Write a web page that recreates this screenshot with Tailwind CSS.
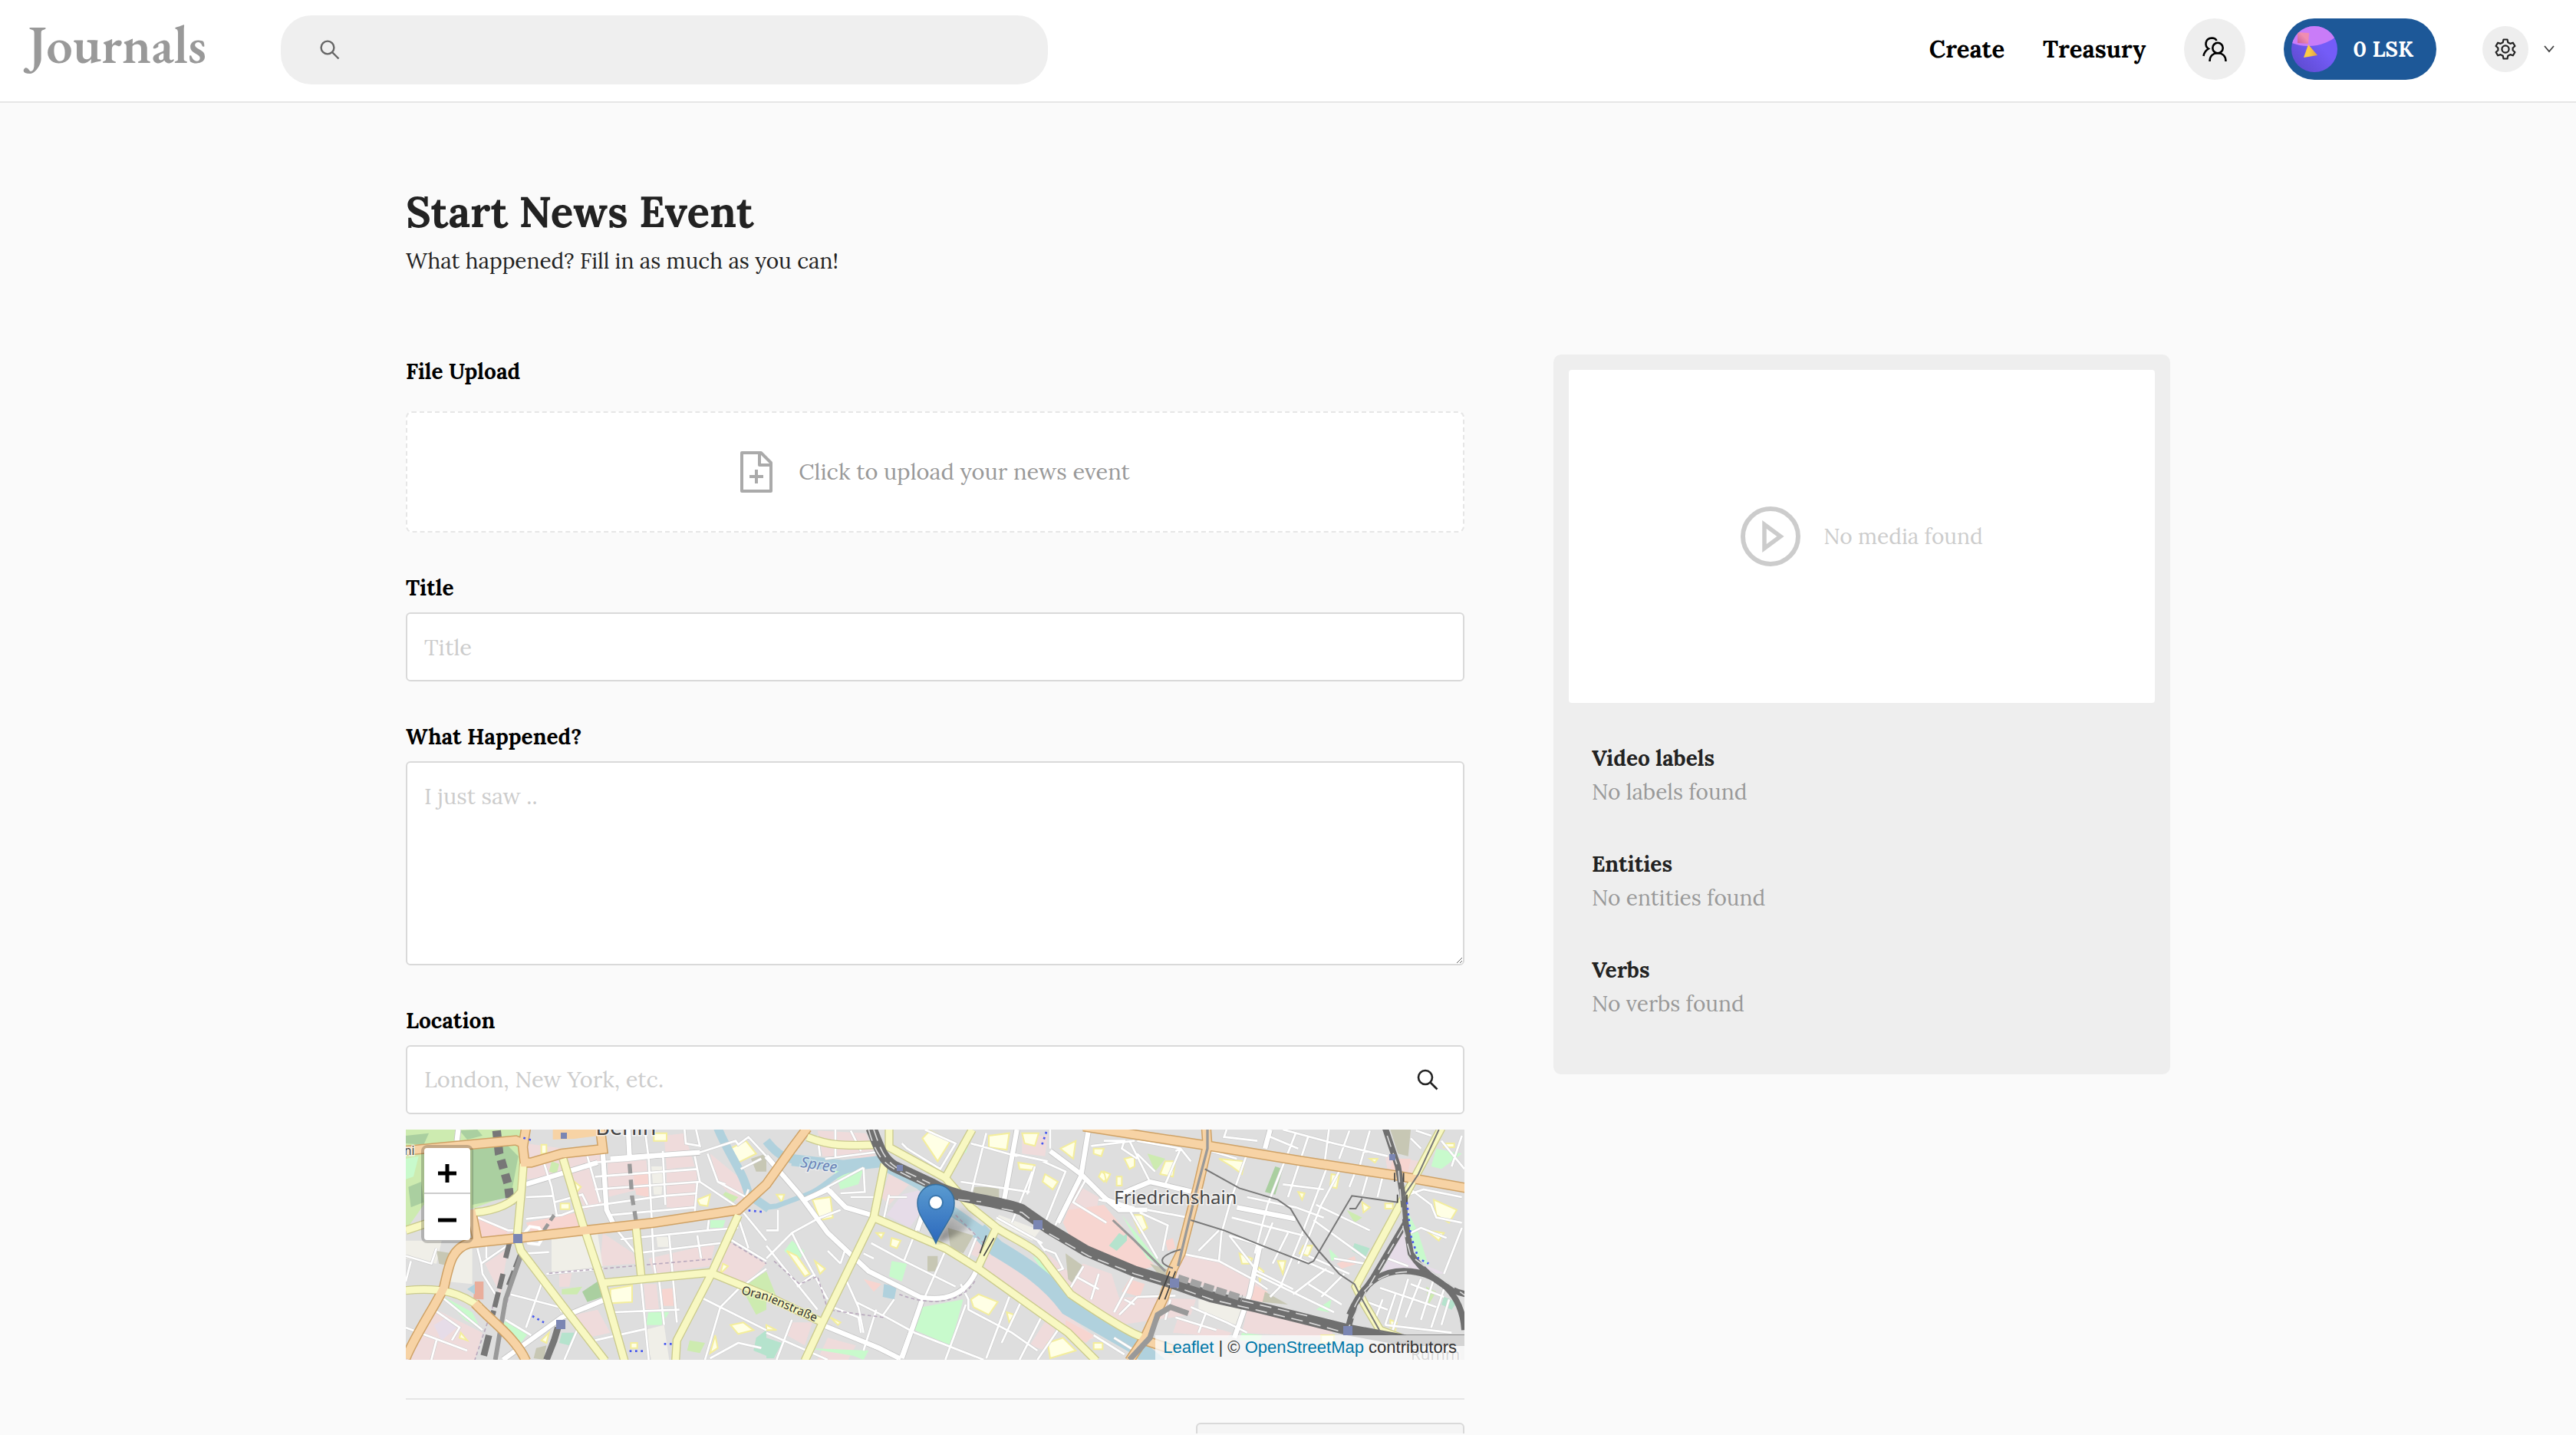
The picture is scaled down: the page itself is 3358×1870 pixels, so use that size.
<!DOCTYPE html>
<html lang="en">
<head>
    <meta charset="UTF-8">
    <meta name="viewport" content="width=device-width, initial-scale=1.0">
    <title>Journals - Start News Event</title>
    <script src="https://cdn.jsdelivr.net/npm/@tailwindcss/browser@4"></script>
</head>
<body class="bg-[#fafafa] min-h-screen overflow-x-hidden font-['Lora','Liberation_Serif',serif] text-[28px] leading-[44px] text-[#222]">
    <header class="bg-white border-b-2 border-[#e6e6e6] h-[134px] flex items-center pl-9 pr-7">
        <a href="#" class="w-[330px] shrink-0 -mt-4 font-['EB_Garamond','Crimson_Text','Liberation_Serif',serif] text-[69px] leading-[80px] font-semibold text-[#999]">Journals</a>
        <label class="w-[1000px] h-[90px] -mt-0.5 rounded-[40px] bg-[#efefef] flex items-center px-[50px] gap-5" for="search">
            <svg class="w-7 h-7 text-[#666]" viewBox="0 0 28 28" fill="none" stroke="currentColor" stroke-width="2.4"><circle cx="11" cy="11" r="8.4"/><path d="M17 17l8.500 8.500"/></svg>
            <input id="search" type="text" aria-label="Search" class="flex-1 bg-transparent outline-none">
        </label>

        <nav class="ml-auto -mt-1 flex items-center text-[31px] font-bold text-black">
            <a href="#">Create</a>
            <a href="#" class="ml-[50px]">Treasury</a>
            <button aria-label="Accounts" class="ml-[50px] w-20 h-20 rounded-full bg-[#eee] flex items-center justify-center">
                <svg class="w-8 h-8" viewBox="0 0 32 32" fill="none" stroke="currentColor" stroke-width="2.6"><circle cx="20" cy="14.500" r="6.700"/><path d="M9.500 32c0-6.500 4-10.800 10.500-10.800S30.500 25.500 30.500 32M1.500 25c.5-4 2.500-7 6.500-9.500-5-3-5.500-13.500 4.500-14 3 0 5 1.500 6 3.500"/></svg>
            </button>
            <button class="ml-[50px] h-20 rounded-full bg-[#1d5898] text-[28px] text-white flex items-center gap-5 pl-[10px] pr-[30px]">
                <svg class="w-[60px] h-[60px]" viewBox="0 0 60 60">
                    <defs>
                        <clipPath id="face"><circle cx="30" cy="30" r="30"/></clipPath>
                        <linearGradient id="violet" x1="1" y1="0" x2="0" y2="1"><stop offset=".4" stop-color="#745cf8"/><stop offset="1" stop-color="#5a48c8"/></linearGradient>
                        <linearGradient id="rose" x1="1" y1="0" x2="0" y2="1"><stop offset=".4" stop-color="#f08db0"/><stop offset="1" stop-color="#c65c9c"/></linearGradient>
                        <linearGradient id="gold"><stop offset=".4" stop-color="#fccb45"/><stop offset="1" stop-color="#dd9a4a"/></linearGradient>
                    </defs>
                    <g clip-path="url(#face)">
                        <path fill="url(#violet)" d="M0 0h60v60H0z"/>
                        <circle cx="22" cy="-34" r="60" fill="#c97cf8"/>
                        <path fill="url(#rose)" d="M8 8l15 1-1 14-14-1z"/>
                        <path fill="url(#gold)" d="M22 24l12 14-18 3z"/>
                    </g>
                </svg>
                0 LSK
            </button>
            <button aria-label="Settings" class="ml-[60px] w-[60px] h-[60px] rounded-full bg-[#eee] flex items-center justify-center">
                <svg class="w-7 h-7" viewBox="0 0 28 28" fill="none" stroke="#222" stroke-width="2.200" stroke-linejoin="round"><path d="M11.500 1.500h5l.8 3.700 3 1.700 3.600-1.200 2.500 4.300-2.800 2.500v3l2.800 2.500-2.500 4.300-3.600-1.200-3 1.700-.8 3.700h-5l-.8-3.700-3-1.700-3.600 1.200L1.600 18l2.800-2.500v-3L1.600 10l2.500-4.300 3.600 1.200 3-1.700z"/><circle cx="14" cy="14" r="4.600"/></svg>
            </button>
            <button aria-label="Open menu" class="ml-5">
                <svg class="w-[14px] h-[10px]" viewBox="0 0 14 10" fill="none" stroke="#444" stroke-width="1.800"><path d="M1 1l6 7 6-7"/></svg>
            </button>
        </nav>
    </header>

    <main class="w-full max-w-[2300px] mx-auto pt-[106px]">
        <h1 class="text-[55px] leading-[72px] font-bold">Start News Event</h1>
        <p class="mt-1.5">What happened? Fill in as much as you can!</p>

        <div class="mt-[100px] flex items-start gap-[116px]">
            <form class="flex-1 text-black">
                <label for="file" class="block font-bold">File Upload</label>
                <label for="file" class="mt-[30px] h-[158px] rounded-lg border-2 border-dashed border-[#e6e6e6] bg-white flex items-center justify-center gap-[34px] text-[29px] text-[#999]">
                    <svg class="w-[42px] h-[54px]" viewBox="0 0 42 54" fill="none" stroke="#aaa" stroke-width="4" stroke-linejoin="round"><path d="M2 2h25l13 13v37H2zM25 2v16h15M21 24v18M12 33h18"/></svg>
                    Click to upload your news event
                    <input id="file" type="file" class="hidden">
                </label>

                <label for="title" class="mt-[50px] block font-bold">Title</label>
                <input id="title" type="text" placeholder="Title" class="mt-[10px] block w-full h-[90px] rounded-md border-2 border-[#d9d9d9] bg-white px-[22px] text-[29px] placeholder:text-[#ccc]">

                <label for="what" class="mt-[50px] block font-bold">What Happened?</label>
                <textarea id="what" placeholder="I just saw .." class="mt-[10px] block w-full h-[266px] rounded-md border-2 border-[#d9d9d9] bg-white px-[22px] py-[22px] text-[29px] resize-y placeholder:text-[#ccc]"></textarea>

                <label for="location" class="mt-[50px] block font-bold">Location</label>
                <div class="mt-[10px] h-[90px] rounded-md border-2 border-[#d9d9d9] bg-white flex items-center pl-[22px] pr-8">
                    <input id="location" type="text" placeholder="London, New York, etc." class="flex-1 text-[29px] outline-none placeholder:text-[#ccc]">
                    <button type="button" aria-label="Find location">
                        <svg class="w-7 h-7" viewBox="0 0 28 28" fill="none" stroke="#222" stroke-width="2.600"><circle cx="11" cy="11" r="9"/><path d="M17.500 17.500l9 9"/></svg>
                    </button>
                </div>

                <!-- Map -->
                <div class="relative mt-5 h-[300px] overflow-hidden bg-[#dedede]">
                    <svg class="w-full h-full" viewBox="30 36 4140 900" preserveAspectRatio="xMidYMid slice" font-family="Noto Sans, sans-serif">
                        <defs>
                            <g id="streets" fill="none">
                                <path d="M500 250L640 210 760 165 900 155 1180 125 1320 80 1330 95 1370 65 1440 140M800 120L815 340 840 410 930 520M895 36L905 150M965 36L980 150 1000 560 1010 620M1035 120L1045 330M1120 36L1125 90 1180 100 1165 36M1160 140L1180 240 1330 340M1210 130L1250 240 1280 250M1340 190L1420 150M1250 240L1360 300 1370 270M740 140L790 320M770 220L1170 190M770 270L1180 240M500 300L610 295M500 385L640 370 720 340 1040 295 1170 285M830 370L1160 340M570 165L600 260 620 370M610 320L720 290 740 330M1170 240L1160 360M1215 390L1210 430M870 465L1210 430 1330 420M925 520L1260 480M1060 450L1090 790M1170 450L1185 540M580 600L800 580M300 375L430 430 450 430M590 515L500 520M30 530L130 560 150 500M50 550L30 630M310 500L325 560 440 480M325 560L330 600 380 680M345 490L345 540M170 690L330 820M140 740L240 810 210 860M30 810L270 900M150 860L130 936M440 680L630 730 640 750M560 640L500 810M420 780L520 840M700 820L650 936M770 860L970 815M840 750L1100 740M950 630L980 936M1020 620L1040 800M1180 690L1440 820M1330 660L1260 730 1200 936M1440 580L1330 660M1350 360L1440 470M1330 380L1370 500M1290 460L1440 550M1220 930L1330 870 1420 890"/>
                                <g transform="translate(1440)">
                                    <path d="M200 60L210 140M270 36L270 150M330 40L370 120M230 150L460 120M380 185L385 280 290 285M250 270L320 345M380 185L240 260 150 310M480 300L550 300M440 300L330 300M0 430L45 430 45 350M0 540L100 440 200 385 290 350M100 440L130 500 240 700M0 490L200 740M120 650L190 600M240 510L290 560M290 560L310 500M380 520L420 540M410 480L540 550 740 650M480 290L460 380M610 370L540 545M700 510L620 690M530 90L550 110 680 190 740 90 620 36M860 50L800 290M800 90L980 140M760 240L930 265 1030 280M1110 36L1110 110M1080 160L1170 200 1090 400M1040 200L960 400M1050 180L1020 290M960 130L1100 160M1230 210L1130 410M1270 100L1440 80M1250 230L1200 320 1330 400M1300 310L1440 340M900 380L1080 480M1080 500L1130 520 1160 580 1130 590M1240 570L1180 670M1210 610L1300 660M1440 600L1360 750M1300 600L1270 700M310 620L360 730 380 830M260 730L360 770 370 830M350 710L470 770 580 830 680 870M240 810L500 920M100 780L40 936M0 830L240 936M430 740L380 900M600 720L520 936M780 720L700 936M790 740L960 830 1060 900M950 690L860 930M1000 700L920 870M1080 760L990 936M1140 820L1060 936M580 830L850 936M500 700L450 770M1280 840L1400 915M760 640L790 700 790 740M820 460L780 560M1090 510L1060 470"/>
                                </g>
                                <g transform="translate(2760)">
                                    <path d="M0 80L80 80 70 110 130 150M100 80L180 240M130 80L300 110 340 160M300 110L240 250M130 130L200 200M480 36L470 65 600 80M560 130L500 300 460 440M750 50L640 330 590 520M800 60L760 180 720 300M700 36L900 90 1110 140M880 36L860 190M960 40L920 150M1040 40L1000 180M640 60L760 110M420 120L520 150M870 190L780 430 690 650M920 200L850 330 760 560M980 210L960 260M1030 220L1010 290M1090 220L1070 300M700 250L860 270M560 300L750 340 860 380M500 380L700 430 780 450M490 450L620 490M490 450L600 590 740 660M830 330L1040 430M820 390L930 470 1040 550M740 530L900 600M800 530L960 600M900 540L1020 560M460 440L450 550M660 400L620 500M720 440L660 560M590 600L900 750M740 680L870 580M800 640L930 720M650 690L700 640M850 690L940 600M300 110L280 120M100 350L210 540M140 360L250 410 230 510M170 350L330 380M450 430L370 510M300 520L450 550 580 620 640 660M260 700L240 780M340 730L480 790 560 830M280 770L440 820M400 750L370 830M130 690L280 685M130 690L60 760M80 700L120 720M40 850L120 900M1080 655L1300 730M1090 700L1060 780M1140 680L1100 800M1190 620L1130 820M1240 620L1180 770M1290 620L1240 780M1330 660L1280 810M1350 700L1320 800M1030 710L1110 740M1100 800L1360 830M1200 640L1330 690M1110 540L1190 570M1200 440L1240 420 1340 460M1200 270L1280 330 1300 380 1400 400M1190 290L1250 270 1400 300M1320 80L1410 190M1400 60L1360 180M1200 70L1240 110M1220 40L1280 60M1400 420L1330 600"/>
                                </g>
                            </g>
                            <g id="streets-wide" fill="none">
                                <path d="M235 36L230 80M500 250L780 165M830 150L1180 125M900 36L905 150M800 120L815 350 840 400M410 936L640 770 810 700"/>
                                <g transform="translate(1440)">
                                    <path d="M0 140L130 290 240 440 400 590 600 690C700 710 780 680 820 590M150 310L240 270 310 340 410 370M980 36L930 310M1260 36L1230 220 1140 400M1110 120L1230 210 1330 310 1440 350M220 800L440 890 520 930M610 700L530 930M610 370L590 430"/>
                                </g>
                                <g transform="translate(2760)"><path d="M0 300L60 350 170 350M60 290L180 240 350 280M520 340L750 385M610 490L570 680 510 850M650 36L630 110"/></g>
                            </g>
                            <g id="roads-yellow" fill="none">
                                <path d="M490 170L480 300 465 460 480 510 640 720 810 940M645 150L720 400 800 640 885 940M930 415L950 605M805 635L1220 595 1440 685 1660 790M1330 370L1280 480 1220 610 1090 860 1085 940M300 360C400 350 450 320 480 280M30 430L120 400M30 665C180 650 250 680 320 730"/>
                                <g transform="translate(1440)"><path d="M160 65C250 100 300 100 440 95M480 36L480 105 700 225 800 340 900 420C960 460 1060 500 1090 550L1190 680C1250 720 1350 790 1440 835L1500 860M805 36L700 225M462 170L420 380 220 790 150 940M420 380L700 500 830 580 1180 830 1290 940M895 430L825 580"/></g>
                                <g transform="translate(2760)"><path d="M1320 30L1180 290 985 650 1020 720 1080 820 1160 850"/></g>
                            </g>
                            <g id="roads-orange" fill="none">
                                <path d="M30 118L460 78 490 90 500 30M485 80L495 165 520 165 640 130 800 112 790 30M30 930C60 850 160 700 180 650 200 560 210 500 280 480L470 460 730 430 1000 400 1330 350 1440 250 1540 110 1600 30M300 715C370 790 460 850 500 940M285 350L310 470"/>
                                <path d="M2680 24L2910 60 3160 98 3540 160 3900 215 4180 265M3160 30L3165 100 3130 250 3060 520 3030 580 2995 690 2920 850 2860 940M2920 860L3040 900"/>
                            </g>
                            <g id="rails" fill="none">
                                <path stroke-width="44" d="M1850 30C1880 100 1890 150 1940 180L2090 250C2190 310 2340 310 2440 350L2540 420 2690 510 2880 590 3010 630 3180 690 3360 730 3560 780 3720 820 3940 860 4180 860"/>
                                <g stroke-width="24">
                                    <path d="M3860 30L3910 180 3930 300 3940 400 3960 520C4010 600 4110 670 4180 680"/>
                                    <path d="M3940 400L3810 620 3740 720 3710 830M3720 760C3780 620 3860 580 3960 590 4060 600 4160 670 4170 820"/>
                                </g>
                            </g>
                        </defs>

                        <!-- land use -->
                        <g fill="#efdbdb">
                            <path d="M500 90L790 130 800 160 640 215 500 230zM660 180L740 165 800 330 730 350zM820 160L970 155 980 260 820 300zM1040 60L1120 50 1160 180 1050 190zM1220 130L1330 220 1360 290 1330 320 1250 240zM300 380L450 430 440 460 310 465zM800 440L920 520 930 560 790 570zM980 540L1240 480 1220 570 1000 600zM1290 470L1440 560 1350 650 1250 590zM340 560L430 500 400 680zM150 740L330 830 300 936 30 936 60 880zM690 760L780 740 830 830 740 850zM1050 190L1170 190 1160 350 1050 340zM630 600L680 590 670 650 630 650zM960 640L1010 640 1020 740 970 750z"/>
                            <g transform="translate(1440)">
                                <path d="M200 40L390 50 430 150 220 140zM480 210L560 250 480 330 450 300zM860 540L900 470 1020 540 1150 740 1290 850 1250 860 850 590zM1090 510L1180 590 1240 560 1350 600 1400 760 1330 770 1190 680zM1100 770L1130 820 1090 900 1030 880zM100 790L180 790 150 880 80 840zM240 850L350 880 320 936 200 936zM1210 250L1300 300 1280 420 1170 380zM1000 60L1100 60 1090 140 1000 130zM720 350L840 420 830 450 740 380zM820 470L870 480 840 540 790 520z"/>
                            </g>
                            <g transform="translate(2760)"><path d="M310 520L500 570 620 650 600 700 280 620zM560 740L880 790 900 850 540 830zM120 690L360 700 340 760 60 800 0 740 0 700zM290 770L500 830 480 850 270 830zM1100 140L1240 160 1220 220 1110 200z"/></g>
                        </g>
                        <g fill="#f7d5d0">
                            <path d="M300 380L430 430 410 470 310 450zM500 400L700 360 710 420 520 440zM920 210L980 210 980 300 930 290zM1030 660L1085 655 1085 725 1035 725z"/>
                            <path d="M2620 350L2760 330 2960 570 2880 590 2640 480 2600 400zM2610 780L2720 840 2690 870 2610 820zM1820 620L1890 640 1860 670zM3000 470L3030 460 3040 500 3010 510zM3340 640L3400 670 3380 710 3330 700zM3890 150L3960 150 3950 200 3880 190zM3670 560L3740 530 3750 560 3690 580zM2860 620L2920 640 2900 690 2830 670z"/>
                        </g>
                        <path fill="#cdebb0" d="M30 36H500L480 170 470 280 290 345 100 330 30 430zM600 480L650 470 650 510 680 500 700 550 660 560 640 520 600 520zM640 660L720 650 700 680 640 680zM1340 650L1440 590 1440 740 1400 760zM1440 590L1480 690 1440 680zM1280 280L1330 300 1310 320 1270 290zM2930 130L3000 150 2960 200zM1140 860L1200 870 1180 910 1130 900zM3710 350L3770 380 3740 400zM4020 650L4060 670 4030 720zM600 160L630 170 620 210 590 200z"/>
                        <path fill="#aacfa0" d="M30 60L120 50 100 95 30 90zM290 80L400 70 470 140 440 300 290 330zM240 40L310 36 330 60 270 75zM720 670L780 630 800 690 740 710zM40 260L90 240 100 320 50 340zM3430 180L3460 190 3430 290 3390 280z"/>
                        <path fill="#c8facc" d="M1540 470L1590 510 1560 560 1510 510zM1930 550L1990 560 1970 630 1920 610zM2050 730L2210 700 2160 880 2020 820zM2480 530L2540 560 2600 640 2550 630zM2200 100L2230 90 2220 130zM1700 180L1820 190 1800 250 1730 270zM4060 110L4160 130 4080 190 4040 180zM3940 340L3990 440 4030 570 3980 530 3950 400zM2830 370L2980 560 3010 580 2930 540zM180 690L290 750 320 810 260 780zM420 780L510 830 480 870 400 830zM980 740L1060 750 1030 800 970 800zM1220 390L1280 390 1270 420 1220 420zM1600 890L1840 900 1820 936 1780 920zM3300 830L3380 840 3370 860 3290 860zM3640 500L3680 540 3650 550zM30 150L80 140 60 220 30 230zM3590 740L3650 700 3640 750z"/>
                        <path fill="#b5e3cd" d="M640 830L690 830 670 880 630 870zM1400 850L1440 820 1440 920 1390 900zM2800 490L2850 440 2850 470 2810 510zM1440 850L1500 870 1470 930 1440 930zM3740 480L3800 500 3780 540 3730 510zM4090 690L4140 710 4120 740 4080 720zM2780 490L2820 440 2850 460 2810 510z"/>
                        <path fill="#f0efe8" d="M30 470L170 470 150 560 30 540zM600 460L780 440 800 570 600 600zM190 520L290 500 290 640 190 630zM990 180L1040 180 1030 290 1000 290zM1010 455L1065 455 1065 495 1015 495zM960 820L1040 800 1060 936 990 936zM2350 370L2510 430 2480 470 2330 400zM3130 700L3330 720 3280 800 3130 750z"/>
                        <path fill="#c7c7b4" d="M150 510L210 520 200 570 160 560zM1380 150L1440 130 1440 200 1400 200zM2150 420L2250 450 2210 520 2160 500zM2250 260L2350 260 2350 310 2250 290zM2610 520L2680 570 2640 640 2620 620zM3880 36L3960 36 3950 140 3910 130zM3390 670L3480 720 3380 710zM540 890L580 880 570 936 530 930zM2070 530L2110 530 2110 590 2070 590zM2940 560L3030 590 2980 610z"/>
                        <path fill="#e6dce8" d="M140 800L190 770 230 810 170 860zM1970 290L2050 270 2050 350 2000 420 1910 370zM3930 420L3950 540 4100 600 3850 590z"/>
                        <g fill="#ffffe5" stroke="#f4ee9c" stroke-width="6">
                            <path d="M1300 110L1360 80 1400 130 1320 170zM830 660L915 645 915 710 830 715zM1000 50h50v30h-50zM1300 800L1350 790 1390 820 1330 835zM1240 840L1250 890 1220 910zM560 95h20v35h-20zM635 325h35v22h-35zM910 870h25v20h-25zM690 240L715 260 700 280zM245 830L270 860 240 850zM1170 310L1220 290 1210 335 1180 330zM590 830L560 860 580 870zM1270 560L1290 570 1260 600z"/>
                            <path transform="translate(1440)" d="M180 310L250 300 260 380 210 390zM80 510L120 530 170 600 150 610zM190 550L230 580 210 600zM610 70L640 40 720 80 670 160zM870 60L950 50 940 115 870 105zM1000 50L1065 50 1050 100 1010 90zM985 165L1050 175 1040 195 990 190zM1090 210L1140 240 1120 270 1080 240zM1150 110L1210 80 1200 150zM1280 110L1320 110 1310 140 1280 130zM1310 200L1340 220 1320 240 1300 220zM430 440L460 440 450 460zM490 460L525 470 510 500 485 490zM800 700L830 680 905 710 870 760 810 730zM940 750L970 760 950 790zM1100 870L1160 850 1210 900 1110 930zM250 770L290 790 280 800zM0 800L40 820 0 820zM40 290L70 290 60 320zM1280 870h35v25h-35z"/>
                            <path transform="translate(2760)" d="M80 150L120 140 120 180 100 190zM240 160L280 160 270 220 220 210zM450 150L550 160 540 210 500 180zM110 370L150 370 170 420 140 440zM890 210L920 215 910 265 885 260zM760 280L785 285 775 310zM1010 320L1040 340 1015 360zM1100 325h30v20h-30zM1290 310L1380 350 1350 400 1300 370zM1260 430L1330 440 1310 470zM780 490L815 490 800 530 765 520zM530 520L580 540 570 560 540 560zM600 570L625 590 610 630zM680 550L710 550 700 600zM1120 780L1145 790 1140 820 1120 810zM1330 90h40v15h-40zM0 200L25 210 10 240zM50 220h20v35h-20zM1040 150L1070 150 1060 165zM850 840h50v30h-50z"/>
                        </g>
                        <path fill="#e9ad9b" d="M300 630h34v70h-40z"/>

                        <!-- river -->
                        <g fill="none" stroke="#b0d1dd">
                            <path stroke-width="34" d="M1250 30C1290 130 1350 200 1370 290L1450 345M1440 80C1480 130 1510 150 1560 155"/>
                            <path stroke-width="46" d="M1540 155L1740 178 1890 160"/>
                            <path stroke-width="20" d="M1790 190C1700 200 1680 260 1600 290L1480 335 1440 340"/>
                            <path stroke-width="40" d="M1890 170L2040 250 2160 350 2290 440"/>
                            <path stroke-width="66" d="M2270 430L2340 500C2440 560 2540 620 2620 730L2880 880 2980 960"/>
                        </g>
                        <path fill="#b0d1dd" d="M1900 640L1950 650 1940 700 1895 690zM270 660L300 640 300 680z"/>

                        <use href="#streets" stroke="#cfcfcf" stroke-width="12"/>
                        <use href="#streets-wide" stroke="#c4c4c4" stroke-width="24"/>
                        <use href="#streets" stroke="#fff" stroke-width="8"/>
                        <use href="#streets-wide" stroke="#fff" stroke-width="19"/>
                        <path fill="none" stroke="#fff" stroke-width="12" d="M495 440L515 415 550 420 570 450 550 485 510 480z"/>
                        <g fill="none" stroke="#b9a9bd" stroke-width="5" stroke-dasharray="14 10">
                            <path d="M590 598L1250 540M500 545L560 610M1290 470L1440 560M1470 550L1570 640 1640 610 1680 740 1820 760 1900 770M1960 680C2060 720 2200 730 2260 620M470 560L400 800M380 700L300 936M2180 370L2290 480"/>
                        </g>
                        <g fill="none" stroke="#777">
                            <path stroke-width="34" stroke-dasharray="36 22" d="M385 40L395 130 430 250 440 330"/>
                            <path stroke-width="20" d="M435 480L420 540M410 600L370 760M480 520L430 650" stroke-dasharray="60 14"/>
                            <path stroke-width="18" stroke="#999" d="M480 530L420 700 380 936"/>
                            <path stroke-width="26" d="M355 840L335 920M625 810L610 860 580 936"/>
                            <path stroke-width="16" stroke="#999" d="M905 170L915 300 930 390" stroke-dasharray="38 24"/>
                            <path stroke-width="14" stroke="#999" stroke-dasharray="30 16" d="M570 430L610 370"/>
                        </g>

                        <use href="#roads-yellow" stroke="#cbcb8c" stroke-width="34"/>
                        <use href="#roads-orange" stroke="#cfa266" stroke-width="40"/>
                        <use href="#roads-yellow" stroke="#f8f8c2" stroke-width="26"/>
                        <path fill="#f7d3a5" d="M605 30H790L785 60 690 72 605 75z"/>
                        <use href="#roads-orange" stroke="#f7d3a5" stroke-width="31"/>

                        <use href="#rails" stroke="#6f6f6f"/>
                        <g fill="none" stroke="#d8d8d8" stroke-width="5" stroke-dasharray="46 26">
                            <path d="M1860 36C1885 110 1900 150 1945 182L2080 246M1840 36C1860 110 1885 160 1940 190L2060 252M2190 310L2280 318M2360 345L2440 360 2540 440 2700 530 2880 600 3010 640 3180 700 3360 742 3560 790 3720 835M3300 705L3560 765M3868 60L3912 190 3930 420 3960 530 4180 690M3930 420L3790 660 3712 820M3740 730C3790 620 3880 590 3960 592"/>
                        </g>
                        <path fill="none" stroke="#a3a3a3" stroke-width="26" stroke-dasharray="42 10" d="M3050 615L3300 695"/>
                        <path fill="none" stroke="#999" stroke-width="22" d="M3090 755L3020 730 2970 760 2940 850 2860 936"/>
                        <g fill="none" stroke="#777" stroke-width="6">
                            <path d="M3155 190L3290 265 3440 310 3490 345 3540 430 3600 510 3680 600 3740 640 3770 700 3840 825 3940 855M3100 390L3230 430 3380 490 3560 560 3580 550 3730 295 3910 320M3060 505C2970 530 2970 560 3030 578M4070 36L3990 210 3930 300M3720 345L3745 345 3770 305"/>
                            <path stroke="#999" stroke-width="10" d="M3165 36L3165 110 3120 280 3050 570"/>
                            <path stroke="#999" stroke-width="9" d="M2795 390L2880 470 3000 590"/>
                        </g>
                        <path fill="none" stroke="#444" stroke-width="5" d="M3018 590L2975 700M3040 590L2998 700M2300 450L2275 520M2330 460L2290 530M3897 205V240M3932 205V240M3908 290V322M3945 290V322"/>
                        <path fill="none" stroke="#4657f0" stroke-width="8" stroke-dasharray="8 14" d="M490 68L530 80M3945 320L3960 450 3990 540 4030 560M905 902H970M525 765L570 790M1370 352L1430 358M1040 874H1070M2535 45L2518 95"/>

                        <!-- stations -->
                        <path fill="#7b86b3" d="M450 444h36v36h-36zM618 780h36v36h-36zM636 48h24v24h-24zM1950 174h24v24h-24zM2484 390h36v36h-36zM3018 618h36v36h-36zM3696 804h36v36h-36zM3876 132h24v24h-24z"/>

                        <!-- place names -->
                        <path id="oranien" fill="none" d="M1340 678L1440 704 1700 818"/>
                        <g fill="#444" stroke="#fff" stroke-opacity=".7" stroke-width="9" paint-order="stroke">
                            <text x="772" y="56" font-size="86">Berlin</text>
                            <text x="2800" y="328" font-size="72">Friedrichshain</text>
                            <text x="24" y="134" font-size="46">ni</text>
                            <text x="3960" y="936" font-size="62" fill="#777">Rumm</text>
                            <text font-size="46" fill="#333" stroke="#f8f8c2"><textPath href="#oranien">Oranienstraße</textPath></text>
                            <text transform="translate(1572 182) rotate(9)" font-size="58" font-style="italic" fill="#6b84b8" stroke-opacity=".4">Spree</text>
                        </g>
                    </svg>

                    <div class="absolute left-5 top-5 rounded-lg border-4 border-black/20 bg-clip-padding overflow-hidden flex flex-col">
                        <button type="button" aria-label="Zoom in" class="w-[60px] h-[60px] pt-2 bg-white border-b-2 border-[#ccc] flex items-center justify-center"><svg class="w-6 h-6" viewBox="0 0 24 24" stroke="#000" stroke-width="5"><path d="M0 12h24M12 0v24"/></svg></button>
                        <button type="button" aria-label="Zoom out" class="w-[60px] h-[60px] pt-2 bg-white flex items-center justify-center"><svg class="w-6 h-6" viewBox="0 0 24 24" stroke="#000" stroke-width="5"><path d="M0 12h24"/></svg></button>
                    </div>

                    <svg class="absolute left-1/2 top-1/2 -translate-x-6 -translate-y-20 w-[82px] h-20" viewBox="0 0 82 80">
                        <defs>
                            <linearGradient id="pin" x2="0" y2="1"><stop offset="0" stop-color="#5a9bd0"/><stop offset="1" stop-color="#2b68bd"/></linearGradient>
                            <linearGradient id="shade" x1="0" y1="1" x2="1" y2="0"><stop offset="0" stop-opacity=".45"/><stop offset="1" stop-opacity="0"/></linearGradient>
                            <filter id="soft" x="-20%" y="-20%" width="140%" height="140%"><feGaussianBlur stdDeviation="3"/></filter>
                        </defs>
                        <path fill="url(#shade)" filter="url(#soft)" d="M25 78L42 44C50 28 76 30 74 44S56 68 25 78z"/>
                        <path fill="url(#pin)" stroke="#356f9f" stroke-width="1.500" d="M25 78C19 64 11 54 5 42 2 36 1 31 1 25.500a24 24 0 0 1 48 0C49 31 48 36 45 42 39 54 31 64 25 78z"/>
                        <circle cx="25" cy="25" r="9" fill="#fff" stroke="#3a76ad" stroke-width="2"/>
                    </svg>

                    <div class="absolute right-0 bottom-0 h-8 px-[10px] bg-white/70 font-['Helvetica_Neue','Liberation_Sans',Arial,sans-serif] text-[22px] leading-8 text-[#333]">
                        <a href="#" class="text-[#0078a8]">Leaflet</a> | © <a href="#" class="text-[#0078a8]">OpenStreetMap</a> contributors
                    </div>
                </div>

                <div class="mt-[50px] border-t-2 border-[#e6e6e6] pt-[30px] h-[46px] overflow-hidden">
                    <button type="submit" aria-label="Submit" class="ml-auto block w-[350px] h-20 rounded-md border-2 border-[#d9d9d9] bg-[#f5f5f5]"></button>
                </div>
            </form>

            <aside class="w-[804px] shrink-0 rounded-[10px] bg-[#eee] p-5 pb-[70px]">
                <div class="h-[434px] rounded bg-white flex items-center justify-center gap-[30px] text-[#ccc]">
                    <svg class="w-[78px] h-[78px]" viewBox="0 0 78 78" fill="none" stroke="currentColor" stroke-width="6"><circle cx="39" cy="39" r="36"/><path d="M31 23.500v31L52 39z" stroke-width="5.500"/></svg>
                    No media found
                </div>
                <div class="mt-[50px] px-[30px] space-y-[50px]">
                    <section>
                        <h2 class="font-bold">Video labels</h2>
                        <p class="text-[#999]">No labels found</p>
                    </section>
                    <section>
                        <h2 class="font-bold">Entities</h2>
                        <p class="text-[#999]">No entities found</p>
                    </section>
                    <section>
                        <h2 class="font-bold">Verbs</h2>
                        <p class="text-[#999]">No verbs found</p>
                    </section>
                </div>
            </aside>
        </div>
    </main>
</body>
</html>
